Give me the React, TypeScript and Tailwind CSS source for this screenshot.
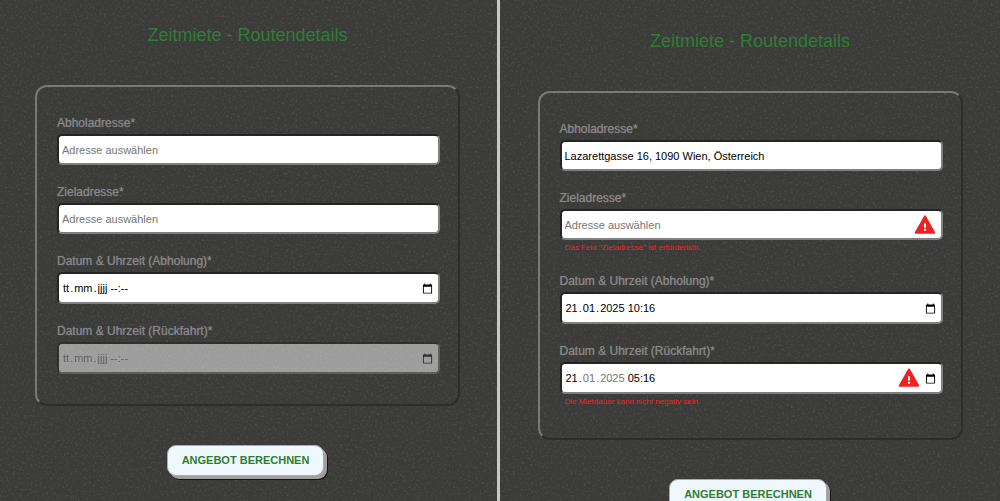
import { useId } from "react";

type Segment = { name: string; hint: string; value?: string; after?: string; locked?: boolean };

const inputFrame =
  "flex w-full items-center rounded-[5px] border-2 border-t-[#242424] border-l-[#242424] border-r-[#808080] border-b-[#808080] bg-white";

function Grain() {
  const id = useId();
  return (
    <svg aria-hidden="true" className="pointer-events-none absolute inset-0 -z-10 h-full w-full">
      <filter id={id} x="0" y="0" width="100%" height="100%">
        <feTurbulence type="fractalNoise" baseFrequency="0.45" numOctaves="2" seed="7" />
        <feColorMatrix values="0 0 0 0 0.62  0 0 0 0 0.62  0 0 0 0 0.61  0.34 0 0 0 -0.18" />
      </filter>
      <rect width="100%" height="100%" filter={`url(#${id})`} />
    </svg>
  );
}

function WarningIcon() {
  return (
    <svg viewBox="0 0 24 24" aria-hidden="true" className="mr-px h-[22px] w-[22px] shrink-0">
      <path d="M12 2.500 22.200 20.500H1.800Z" fill="#ee2222" stroke="#ee2222" strokeWidth="2" strokeLinejoin="round" />
      <path d="M10.900 10h2.200v4.800h-2.200zM10.900 16h2.200v2.200h-2.200z" fill="#fff" />
    </svg>
  );
}

function CalendarIcon() {
  return (
    <svg viewBox="0 0 24 24" aria-hidden="true" className="block h-[11px] w-[11px]" fill="currentColor">
      <path d="M20 3h-1V1h-2v2H7V1H5v2H4c-1.100 0-2 .9-2 2v16c0 1.100.9 2 2 2h16c1.100 0 2-.9 2-2V5c0-1.100-.9-2-2-2zm0 18H4V8h16v13z" />
    </svg>
  );
}

function Label({ id, text }: { id: string; text: string }) {
  return (
    <label htmlFor={id} className="mb-[3px] block text-[12px] leading-4 text-[#888888] [text-shadow:0_0_1px_#777777]">
      {text}
    </label>
  );
}

function ErrorText({ id, text }: { id: string; text: string }) {
  return (
    <p id={id} className="pt-0.5 pl-[5px] text-[8px] leading-3 text-[#f02222]">
      {text}
    </p>
  );
}

function AddressField({ label, value, error }: { label: string; value?: string; error?: string }) {
  const id = useId();
  return (
    <div>
      <Label id={id} text={label} />
      <div className={`${inputFrame} h-[31px] pr-1`}>
        <input
          id={id}
          type="text"
          defaultValue={value}
          placeholder="Adresse auswählen"
          aria-invalid={!!error}
          aria-describedby={error ? `${id}-error` : undefined}
          className="h-full min-w-0 flex-1 bg-transparent px-[3px] text-[11px] text-black outline-none placeholder:text-[#757575]"
        />
        {error && <WarningIcon />}
      </div>
      {error && <ErrorText id={`${id}-error`} text={error} />}
    </div>
  );
}

function dateSegments(values: string[], lockedParts: string[] = []): Segment[] {
  const parts = [
    { name: "Tag", hint: "tt", after: "." },
    { name: "Monat", hint: "mm", after: "." },
    { name: "Jahr", hint: "jjjj", after: "\u00a0" },
    { name: "Stunde", hint: "--", after: ":" },
    { name: "Minute", hint: "--" },
  ];
  return parts.map((part, i) => ({ ...part, value: values[i], locked: lockedParts.includes(part.name) }));
}

function DateTimeField({
  label,
  segments,
  error,
  disabled,
}: {
  label: string;
  segments: Segment[];
  error?: string;
  disabled?: boolean;
}) {
  const id = useId();
  const tone = disabled ? "text-[#848484] placeholder:text-[#848484]" : "text-black placeholder:text-black";
  return (
    <div>
      <Label id={id} text={label} />
      <div role="group" aria-label={label} className={`${inputFrame} h-8 pr-1 pl-1 ${disabled ? "opacity-50" : ""}`}>
        <div className="flex flex-1 items-center text-[11px] leading-4">
          {segments.map((s, i) => (
            <span key={s.name} className="flex">
              <input
                id={i === 0 ? id : undefined}
                type="text"
                inputMode="numeric"
                aria-label={i === 0 ? undefined : s.name}
                placeholder={s.hint}
                defaultValue={s.value}
                disabled={disabled || s.locked}
                className={`[field-sizing:content] bg-transparent outline-none ${s.locked ? "text-[#757575]" : tone}`}
              />
              {s.after && (
                <span className={`${s.after === "." ? "px-px" : ""} ${s.locked ? "text-[#757575]" : tone}`}>
                  {s.after}
                </span>
              )}
            </span>
          ))}
        </div>
        {error && <WarningIcon />}
        <button
          type="button"
          aria-label="Kalender öffnen"
          disabled={disabled}
          className={`ml-1 pr-px ${disabled ? "text-[#222222]" : "text-black"}`}
        >
          <CalendarIcon />
        </button>
      </div>
      {error && <ErrorText id={`${id}-error`} text={error} />}
    </div>
  );
}

function RoutePanel({ className, children }: { className: string; children: React.ReactNode }) {
  return (
    <section className={`relative isolate w-1/2 min-w-0 overflow-hidden bg-[#3b3b3a] ${className}`}>
      <Grain />
      <form className="mx-auto flex max-w-[425px] flex-col items-center">
        <h2 className="text-[18px] leading-[22px] text-[#2e7d32]">Zeitmiete - Routendetails</h2>
        <div className="mt-[39px] flex w-full flex-col gap-[19px] rounded-[12px] border-2 border-t-[#7a7876] border-r-[#2d2d2c] border-b-[#2d2d2c] border-l-[#7a7876] pt-7 pr-[18px] pb-[30px] pl-5">
          {children}
        </div>
        <button
          type="button"
          className="mt-[39px] mr-1 h-[31px] rounded-[9px] border border-[#b0a9aa] bg-[#f0f8ff] px-[14px] text-[11px] font-bold text-[#2e7d32] [box-shadow:3px_3px_0_#a39e9e,4px_4px_0_#151515]"
        >
          ANGEBOT BERECHNEN
        </button>
      </form>
    </section>
  );
}

export default function App() {
  return (
    <main className="flex h-screen overflow-hidden font-['Liberation_Sans',Arial,sans-serif]">
      <RoutePanel className="border-r-[3px] border-[#c8c8c8] pt-6 pr-0.5">
        <AddressField label="Abholadresse*" />
        <AddressField label="Zieladresse*" />
        <DateTimeField label="Datum & Uhrzeit (Abholung)*" segments={dateSegments([])} />
        <DateTimeField label="Datum & Uhrzeit (Rückfahrt)*" segments={dateSegments([])} disabled />
      </RoutePanel>
      <RoutePanel className="pt-[30px]">
        <AddressField label="Abholadresse*" value="Lazarettgasse 16, 1090 Wien, Österreich" />
        <AddressField label="Zieladresse*" error={'Das Feld "Zieladresse" ist erforderlich.'} />
        <DateTimeField
          label="Datum & Uhrzeit (Abholung)*"
          segments={dateSegments(["21", "01", "2025", "10", "16"])}
        />
        <DateTimeField
          label="Datum & Uhrzeit (Rückfahrt)*"
          segments={dateSegments(["21", "01", "2025", "05", "16"], ["Monat", "Jahr"])}
          error="Die Mietdauer kann nicht negativ sein."
        />
      </RoutePanel>
    </main>
  );
}
